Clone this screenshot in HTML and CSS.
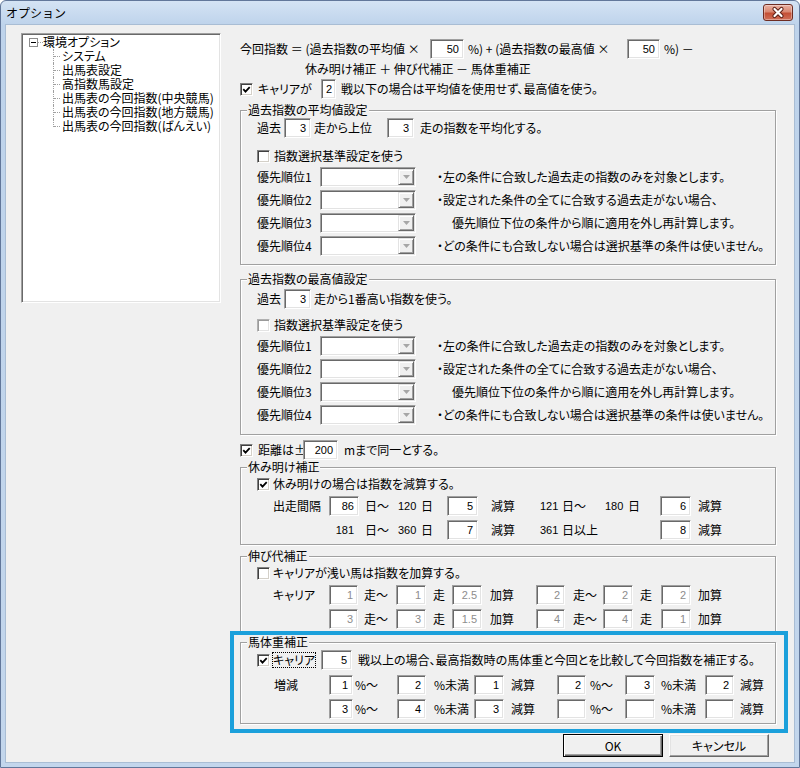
FILE: index.html
```html
<!DOCTYPE html>
<html lang="ja">
<head>
<meta charset="utf-8">
<title>オプション</title>
<link rel="stylesheet" href="styles.css">
</head>
<body>
<div class="window">
  <div class="titlebar">
    <span class="title">オプション</span>
    <span class="close"><svg width="28" height="15" viewBox="0 0 28 15"><path d="M10.5 4 L17.5 11 M17.5 4 L10.5 11" stroke="#5e2016" stroke-width="4.2" stroke-linecap="round"/><path d="M10.5 4 L17.5 11 M17.5 4 L10.5 11" stroke="#fff" stroke-width="2.2" stroke-linecap="round"/></svg></span>
  </div>
  <div class="client">
    <div class="tree">
      <div class="tnode"><span class="exp"><svg width="9" height="9" viewBox="0 0 9 9"><rect x="0.5" y="0.5" width="8" height="8" fill="#fff" stroke="#8c8c8c"/><path d="M2 4.5 H7" stroke="#000"/></svg></span><span class="tdots"></span><span>環境オプション</span></div>
      <ul class="tchildren">
        <li><span class="conn"></span><span>システム</span></li>
        <li><span class="conn"></span><span>出馬表設定</span></li>
        <li><span class="conn"></span><span>高指数馬設定</span></li>
        <li><span class="conn"></span><span>出馬表の今回指数(中央競馬)</span></li>
        <li><span class="conn"></span><span>出馬表の今回指数(地方競馬)</span></li>
        <li><span class="conn"></span><span>出馬表の今回指数(ばんえい)</span></li>
      </ul>
    </div>

    <div class="main">
      <div class="row">
        <span class="f1">今回指数 ＝ (過去指数の平均値 ×</span>
        <span class="box w34">50</span>
        <span class="f2">%) + (過去指数の最高値 ×</span>
        <span class="box w33">50</span>
        <span class="pl4">%) －</span>
      </div>
      <div class="line2">休み明け補正 ＋ 伸び代補正 － 馬体重補正</div>
      <div class="row mt3">
        <span class="cb"><svg width="9" height="9" viewBox="0 0 9 9"><path d="M1.3 4.2 L3.5 6.6 L7.7 2.2" fill="none" stroke="#000" stroke-width="1.8"/></svg></span>
        <span class="carrier-t">キャリアが</span>
        <span class="box w15">2</span>
        <span class="pl5">戦以下の場合は平均値を使用せず、最高値を使う。</span>
      </div>

      <div class="group g1">
        <div class="glabel">過去指数の平均値設定</div>
        <div class="row mt1">
          <span class="kako-l">過去</span><span class="box w27">3</span><span class="kako-m">走から上位</span><span class="box w27">3</span><span class="pl6">走の指数を平均化する。</span>
        </div>
        <div class="row mt8"><span class="cb"></span><span class="pl4">指数選択基準設定を使う</span></div>
        <div class="row mt1"><span class="pri-l">優先順位1</span><span class="combo"><span class="drop"><svg width="7" height="4" viewBox="0 0 7 4"><path d="M0 0 H7 L3.5 4 Z" fill="#a6a6a6"/></svg></span></span><span class="pri-d">・左の条件に合致した過去走の指数のみを対象とします。</span></div>
        <div class="row mt3"><span class="pri-l">優先順位2</span><span class="combo"><span class="drop"><svg width="7" height="4" viewBox="0 0 7 4"><path d="M0 0 H7 L3.5 4 Z" fill="#a6a6a6"/></svg></span></span><span class="pri-d">・設定された条件の全てに合致する過去走がない場合、</span></div>
        <div class="row mt3"><span class="pri-l">優先順位3</span><span class="combo"><span class="drop"><svg width="7" height="4" viewBox="0 0 7 4"><path d="M0 0 H7 L3.5 4 Z" fill="#a6a6a6"/></svg></span></span><span class="pri-d2">優先順位下位の条件から順に適用を外し再計算します。</span></div>
        <div class="row mt3"><span class="pri-l">優先順位4</span><span class="combo"><span class="drop"><svg width="7" height="4" viewBox="0 0 7 4"><path d="M0 0 H7 L3.5 4 Z" fill="#a6a6a6"/></svg></span></span><span class="pri-d">・どの条件にも合致しない場合は選択基準の条件は使いません。</span></div>
      </div>

      <div class="group g2">
        <div class="glabel">過去指数の最高値設定</div>
        <div class="row mt3">
          <span class="kako-l">過去</span><span class="box w27">3</span><span class="pl3">走から1番高い指数を使う。</span>
        </div>
        <div class="row mt6"><span class="cb dim"></span><span class="pl4">指数選択基準設定を使う</span></div>
        <div class="row mt1"><span class="pri-l">優先順位1</span><span class="combo"><span class="drop"><svg width="7" height="4" viewBox="0 0 7 4"><path d="M0 0 H7 L3.5 4 Z" fill="#a6a6a6"/></svg></span></span><span class="pri-d">・左の条件に合致した過去走の指数のみを対象とします。</span></div>
        <div class="row mt3"><span class="pri-l">優先順位2</span><span class="combo"><span class="drop"><svg width="7" height="4" viewBox="0 0 7 4"><path d="M0 0 H7 L3.5 4 Z" fill="#a6a6a6"/></svg></span></span><span class="pri-d">・設定された条件の全てに合致する過去走がない場合、</span></div>
        <div class="row mt3"><span class="pri-l">優先順位3</span><span class="combo"><span class="drop"><svg width="7" height="4" viewBox="0 0 7 4"><path d="M0 0 H7 L3.5 4 Z" fill="#a6a6a6"/></svg></span></span><span class="pri-d2">優先順位下位の条件から順に適用を外し再計算します。</span></div>
        <div class="row mt3"><span class="pri-l">優先順位4</span><span class="combo"><span class="drop"><svg width="7" height="4" viewBox="0 0 7 4"><path d="M0 0 H7 L3.5 4 Z" fill="#a6a6a6"/></svg></span></span><span class="pri-d">・どの条件にも合致しない場合は選択基準の条件は使いません。</span></div>
      </div>

      <div class="row mt5">
        <span class="cb"><svg width="9" height="9" viewBox="0 0 9 9"><path d="M1.3 4.2 L3.5 6.6 L7.7 2.2" fill="none" stroke="#000" stroke-width="1.8"/></svg></span>
        <span class="dist-t">距離は±</span>
        <span class="box w35">200</span>
        <span class="pl6">mまで同一とする。</span>
      </div>

      <div class="group g3">
        <div class="glabel">休み明け補正</div>
        <div class="row">
          <span class="cb"><svg width="9" height="9" viewBox="0 0 9 9"><path d="M1.3 4.2 L3.5 6.6 L7.7 2.2" fill="none" stroke="#000" stroke-width="1.8"/></svg></span>
          <span class="pl3">休み明けの場合は指数を減算する。</span>
        </div>
        <div class="grid g3grid mt2">
          <span>出走間隔</span>
          <span class="box">86</span>
          <span class="pl6">日～</span>
          <span class="num ar">120</span>
          <span class="pl3">日</span>
          <span class="box">5</span>
          <span class="pl13">減算</span>
          <span class="num ar">121</span>
          <span class="pl2">日～</span>
          <span class="num ar">180</span>
          <span class="pl3">日</span>
          <span class="box">6</span>
          <span class="pl7">減算</span>
        </div>
        <div class="grid g3grid mt4">
          <span></span>
          <span class="num ar pr5">181</span>
          <span class="pl6">日～</span>
          <span class="num ar">360</span>
          <span class="pl3">日</span>
          <span class="box">7</span>
          <span class="pl13">減算</span>
          <span class="num ar">361</span>
          <span class="pl2">日以上</span>
          <span></span>
          <span></span>
          <span class="box">8</span>
          <span class="pl7">減算</span>
        </div>
      </div>

      <div class="group g4">
        <div class="glabel">伸び代補正</div>
        <div class="row">
          <span class="cb"></span>
          <span class="pl3">キャリアが浅い馬は指数を加算する。</span>
        </div>
        <div class="grid g4grid mt2">
          <span>キャリア</span>
          <span class="box dis">1</span>
          <span class="pl6">走～</span>
          <span class="box dis">1</span>
          <span class="pl7">走</span>
          <span class="box dis">2.5</span>
          <span class="pl8">加算</span>
          <span class="box dis">2</span>
          <span class="pl8">走～</span>
          <span class="box dis">2</span>
          <span class="pl7">走</span>
          <span class="box dis">2</span>
          <span class="pl7">加算</span>
        </div>
        <div class="grid g4grid mt4">
          <span></span>
          <span class="box dis">3</span>
          <span class="pl6">走～</span>
          <span class="box dis">3</span>
          <span class="pl7">走</span>
          <span class="box dis">1.5</span>
          <span class="pl8">加算</span>
          <span class="box dis">4</span>
          <span class="pl8">走～</span>
          <span class="box dis">4</span>
          <span class="pl7">走</span>
          <span class="box dis">1</span>
          <span class="pl7">加算</span>
        </div>
      </div>

      <div class="hl">
        <div class="group g5">
          <div class="glabel">馬体重補正</div>
          <div class="row mt1">
            <span class="cb"><svg width="9" height="9" viewBox="0 0 9 9"><path d="M1.3 4.2 L3.5 6.6 L7.7 2.2" fill="none" stroke="#000" stroke-width="1.8"/></svg></span>
            <span class="focus">キャリア</span>
            <span class="box w31 ml5">5</span>
            <span class="pl6">戦以上の場合、最高指数時の馬体重と今回とを比較して今回指数を補正する。</span>
          </div>
          <div class="grid g5grid mt5">
            <span class="pl1">増減</span>
            <span class="box">1</span>
            <span class="pl2">%～</span>
            <span class="box">2</span>
            <span class="pl8">%未満</span>
            <span class="box">1</span>
            <span class="pl7">減算</span>
            <span class="box">2</span>
            <span class="pl4">%～</span>
            <span class="box">3</span>
            <span class="pl6">%未満</span>
            <span class="box">2</span>
            <span class="pl6">減算</span>
          </div>
          <div class="grid g5grid mt4">
            <span></span>
            <span class="box">3</span>
            <span class="pl2">%～</span>
            <span class="box">4</span>
            <span class="pl8">%未満</span>
            <span class="box">3</span>
            <span class="pl7">減算</span>
            <span class="box"></span>
            <span class="pl4">%～</span>
            <span class="box"></span>
            <span class="pl6">%未満</span>
            <span class="box"></span>
            <span class="pl6">減算</span>
          </div>
        </div>
      </div>

      <div class="buttons">
        <span class="btn default">OK</span>
        <span class="btn">キャンセル</span>
      </div>
    </div>
  </div>
</div>
</body>
</html>
```

FILE: styles.css
```css
* { box-sizing: border-box; }
html, body { margin: 0; padding: 0; }
body {
  width: 800px;
  height: 768px;
  overflow: hidden;
  font-family: "Noto Sans CJK JP", "Noto Sans", sans-serif;
  font-size: 12px;
  line-height: 14px;
  color: #000;
  font-feature-settings: "palt";
  background: #fff;
}

.window {
  width: 800px;
  height: 768px;
  border: 1px solid #62779a;
  border-radius: 6px 6px 0 0;
  padding: 0 5px 5px 5px;
  background: linear-gradient(180deg, #d4e3f4 0px, #bed3eb 24px, #c3d6ec 100%);
  display: flex;
  flex-direction: column;
}

.titlebar {
  height: 24px;
  flex: 0 0 24px;
  display: flex;
  align-items: center;
  justify-content: space-between;
}
.title {
  font-size: 12px;
  font-feature-settings: normal;
  color: #000;
  margin-top: -1px;
}
.close {
  align-self: flex-start;
  margin-top: 3px;
  margin-right: 1px;
  width: 30px;
  height: 17px;
  border: 1px solid #6e2c22;
  border-radius: 3px;
  background: linear-gradient(180deg, #eab0a2 0%, #d98872 45%, #c44f35 55%, #d0705a 100%);
  box-shadow: inset 0 0 0 1px rgba(255,255,255,0.35);
  display: flex;
  align-items: center;
  justify-content: center;
}

.client {
  flex: 1;
  background: #f0f0f0;
  display: flex;
  align-items: flex-start;
  box-shadow: 0 0 0 1px #a9bdd4;
}

/* Tree */
.tree {
  margin: 8px 0 0 15px;
  width: 200px;
  height: 270px;
  flex: 0 0 200px;
  background: #fff;
  border: 1px solid;
  border-color: #a0a0a0 #fff #fff #a0a0a0;
  box-shadow: inset 1px 1px 0 #696969, inset -1px -1px 0 #e3e3e3;
  padding: 1px;
}
.tnode {
  height: 14px;
  display: flex;
  align-items: center;
}
.exp {
  width: 9px;
  height: 9px;
  margin-left: 6px;
  display: flex;
}
.tdots {
  width: 5px;
  border-top: 1px dotted #a0a0a0;
}
.tchildren {
  list-style: none;
  margin: 0 0 0 30px;
  padding: 0;
}
.tchildren li {
  height: 14px;
  display: flex;
  align-items: flex-start;
  white-space: nowrap;
}
.conn {
  position: relative;
  width: 7px;
  height: 14px;
  flex: 0 0 7px;
  border-left: 1px dotted #a0a0a0;
  margin-right: 2px;
}
.conn::after {
  content: "";
  position: absolute;
  left: 0;
  top: 7px;
  width: 6px;
  border-top: 1px dotted #a0a0a0;
}
.tchildren li:last-child .conn { height: 8px; }

/* Main */
.main {
  margin-left: 19px;
  width: 536px;
  flex: 0 0 536px;
  padding-top: 14px;
}
.row {
  display: flex;
  align-items: center;
  height: 20px;
  white-space: nowrap;
}
.line2 {
  margin: 3px 0 0 65px;
  height: 14px;
  white-space: nowrap;
}
.grid {
  display: grid;
  align-items: center;
  height: 20px;
  margin-left: 16px;
  white-space: nowrap;
}
.g3grid { grid-template-columns: 56px 30px 39px 20px 29px 31px 62px 20px 45px 20px 35px 31px auto; }
.g4grid { grid-template-columns: 56px 29px 38px 30px 26px 30px 54px 29px 38px 30px 28px 30px auto; }
.g5grid { grid-template-columns: 56px 24px 44px 29px 48px 30px 53px 29px 39px 30px 50px 29px auto; }

.mt1 { margin-top: 1px; }
.mt2 { margin-top: 2px; }
.mt3 { margin-top: 3px; }
.mt4 { margin-top: 4px; }
.mt5 { margin-top: 5px; }
.mt6 { margin-top: 6px; }
.mt8 { margin-top: 8px; }
.pl1 { padding-left: 1px; }
.pl2 { padding-left: 2px; }
.pl3 { padding-left: 3px; }
.pl4 { padding-left: 4px; }
.pl5 { padding-left: 5px; }
.pl6 { padding-left: 6px; }
.pl7 { padding-left: 7px; }
.pl8 { padding-left: 8px; }
.pl13 { padding-left: 13px; }
.ml5 { margin-left: 5px; }
.ar { text-align: right; padding-right: 2px; }
.pr5 { padding-right: 5px; }

.f1 { width: 190px; flex: 0 0 190px; }
.f2 { width: 163px; flex: 0 0 163px; padding-left: 4px; }
.carrier-t { width: 63px; flex: 0 0 63px; margin-left: 5px; }
.dist-t { width: 45px; flex: 0 0 45px; margin-left: 5px; }
.kako-l { width: 27px; flex: 0 0 27px; }
.kako-m { width: 76px; flex: 0 0 76px; padding-left: 3px; }
.pri-l { width: 63px; flex: 0 0 63px; }
.pri-d { padding-left: 21px; }
.pri-d2 { padding-left: 36px; }

.num {
  font-family: "Liberation Sans", Arial, sans-serif;
  font-size: 11px;
}

/* Edit boxes */
.box {
  height: 20px;
  background: #fff;
  border: 1px solid;
  border-color: #a0a0a0 #fff #fff #a0a0a0;
  box-shadow: inset 1px 1px 0 #696969, inset -1px -1px 0 #e3e3e3;
  display: flex;
  align-items: center;
  justify-content: flex-end;
  padding-right: 4px;
  font-family: "Liberation Sans", Arial, sans-serif;
  font-size: 11px;
  color: #000;
}
.box.dis { color: #8d8d8d; }
.w15 { width: 15px; flex: 0 0 15px; padding-right: 3px; }
.w27 { width: 27px; flex: 0 0 27px; }
.w31 { width: 31px; flex: 0 0 31px; }
.w33 { width: 33px; flex: 0 0 33px; }
.w34 { width: 34px; flex: 0 0 34px; }
.w35 { width: 35px; flex: 0 0 35px; }

/* Checkbox */
.cb {
  width: 13px;
  height: 13px;
  flex: 0 0 13px;
  background: #fff;
  border: 1px solid;
  border-color: #808080 #fff #fff #808080;
  box-shadow: inset 1px 1px 0 #404040, inset -1px -1px 0 #d4d0c8;
  display: flex;
  align-items: center;
  justify-content: center;
}
.cb.dim {
  border-color: #b0b0b0 #fff #fff #b0b0b0;
  box-shadow: inset 1px 1px 0 #9a9a9a, inset -1px -1px 0 #e3e3e3;
}
.focus {
  margin-left: 2px;
  width: 44px;
  flex: 0 0 44px;
  height: 16px;
  line-height: 14px;
  border: 1px dotted #000;
}

/* Combo */
.combo {
  width: 96px;
  height: 20px;
  flex: 0 0 96px;
  background: #fff;
  border: 1px solid;
  border-color: #a0a0a0 #fff #fff #a0a0a0;
  box-shadow: inset 1px 1px 0 #696969, inset -1px -1px 0 #e3e3e3;
  padding: 1px;
  display: flex;
  justify-content: flex-end;
}
.drop {
  width: 16px;
  height: 16px;
  background: #f0f0f0;
  border: 1px solid;
  border-color: #e3e3e3 #696969 #696969 #e3e3e3;
  box-shadow: inset 1px 1px 0 #fff, inset -1px -1px 0 #a0a0a0;
  display: flex;
  align-items: center;
  justify-content: center;
}

/* Group boxes */
.group {
  border: 1px solid #a0a0a0;
  box-shadow: inset 1px 1px 0 #fff, 1px 1px 0 #fff;
  padding: 0 0 8px 16px;
}
.glabel {
  display: table;
  margin: -8px 0 0 -10px;
  padding: 0 1px;
  height: 14px;
  background: #f0f0f0;
  white-space: nowrap;
}
.g1 { margin-top: 11px; padding-bottom: 8px; }
.g2 { margin-top: 14px; padding-bottom: 9px; }
.g3 { margin-top: 7px; padding-bottom: 4px; }
.g4 { margin-top: 11px; padding-bottom: 3px; }
.hl { position: relative; margin-top: 9px; }
.hl::after {
  content: "";
  position: absolute;
  left: -10px;
  right: -12px;
  top: -11px;
  bottom: -9px;
  border: 4px solid #1ba0db;
  pointer-events: none;
}
.g5 { padding-bottom: 4px; }

/* Buttons */
.buttons {
  margin-top: 10px;
  padding-left: 323px;
  display: flex;
  gap: 6px;
}
.btn {
  width: 100px;
  height: 23px;
  background: #f0f0f0;
  border: 1px solid;
  border-color: #fff #696969 #696969 #fff;
  box-shadow: inset -1px -1px 0 #a0a0a0, inset 1px 1px 0 #e3e3e3;
  display: flex;
  align-items: center;
  justify-content: center;
}
.btn.default {
  border-color: #000;
  box-shadow: inset 1px 1px 0 #fff, inset -1px -1px 0 #696969, inset -2px -2px 0 #a0a0a0;
}
```
